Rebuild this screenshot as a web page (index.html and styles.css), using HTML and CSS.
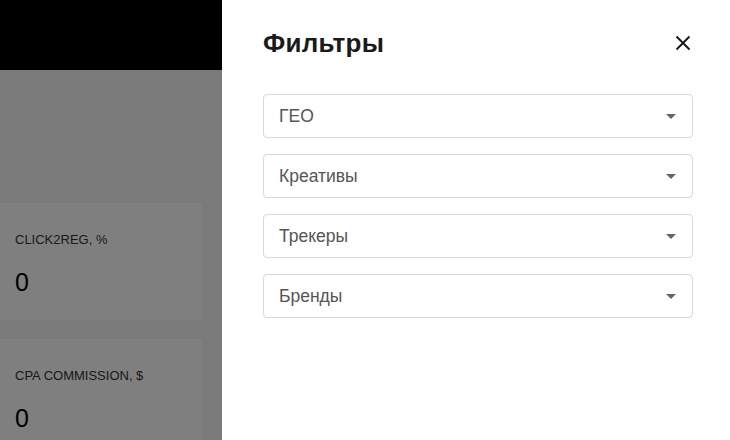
FILE: index.html
```html
<!DOCTYPE html>
<html lang="ru">
<head>
<meta charset="utf-8">
<link rel="stylesheet" href="styles.css">
</head>
<body>
<div class="page">
  <header class="topbar"></header>
  <main class="content">
    <div class="stats">
      <div class="card">
        <div class="card-label">CLICK2REG, %</div>
        <div class="card-value">0</div>
      </div>
      <div class="card">
        <div class="card-label">CPA COMMISSION, $</div>
        <div class="card-value">0</div>
      </div>
    </div>
  </main>
</div>
<div class="mask"></div>
<aside class="drawer">
  <div class="drawer-head">
    <h2 class="drawer-title">Фильтры</h2>
    <button class="close" aria-label="Закрыть">
      <svg width="16" height="16" viewBox="0 0 16 16"><path d="M1.5 1.5 L14.5 14.5 M14.5 1.5 L1.5 14.5" stroke="#111" stroke-width="1.8" fill="none"/></svg>
    </button>
  </div>
  <div class="filters">
    <div class="select"><span>ГЕО</span><i class="caret"></i></div>
    <div class="select"><span>Креативы</span><i class="caret"></i></div>
    <div class="select"><span>Трекеры</span><i class="caret"></i></div>
    <div class="select"><span>Бренды</span><i class="caret"></i></div>
  </div>
</aside>
</body>
</html>
```
FILE: styles.css
```css
* { box-sizing: border-box; }
html, body { margin: 0; padding: 0; }
body {
  width: 730px;
  height: 440px;
  overflow: hidden;
  font-family: "Liberation Sans", Arial, sans-serif;
  background: #f5f5f5;
}
.page { width: 730px; height: 440px; }
.topbar { height: 70px; background: #000; }
.content { padding-top: 133px; }
.stats { display: flex; flex-direction: column; gap: 19px; width: 202px; }
.card {
  background: #fff;
  height: 117px;
  padding: 29px 15px 0;
}
.card-label { font-size: 13px; color: #333; }
.card-value { font-size: 25px; color: #000; margin-top: 21px; }

.mask {
  position: fixed;
  inset: 0;
  background: rgba(0, 0, 0, 0.5);
}
.drawer {
  position: fixed;
  top: 0;
  right: 0;
  bottom: 0;
  width: 508px;
  background: #fff;
  padding: 26px 37px 0 41px;
}
.drawer-head {
  display: flex;
  align-items: center;
  justify-content: space-between;
  height: 34px;
  margin-bottom: 34px;
}
.drawer-title {
  margin: 0;
  font-size: 26px;
  font-weight: 700;
  color: #1a1a1a;
  letter-spacing: 0.3px;
}
.close {
  border: 0;
  background: none;
  padding: 0;
  width: 16px;
  height: 16px;
  margin-right: 2px;
  display: flex;
}
.filters { display: flex; flex-direction: column; gap: 16px; }
.select {
  height: 44px;
  border: 1px solid #d9d9d9;
  border-radius: 4px;
  display: flex;
  align-items: center;
  justify-content: space-between;
  padding: 0 16px 0 15px;
  font-size: 17.5px;
  color: #555;
}
.caret {
  width: 0;
  height: 0;
  border-left: 5px solid transparent;
  border-right: 5px solid transparent;
  border-top: 5px solid #666;
}
```
